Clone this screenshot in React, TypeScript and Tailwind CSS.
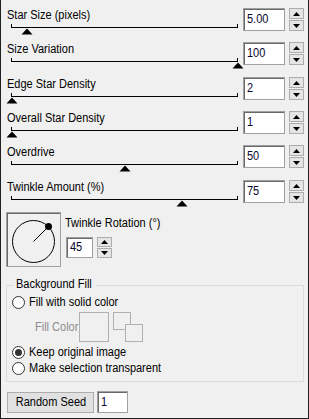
import React from "react";

const FONT = "font-['Liberation_Sans',Arial,sans-serif]";

function T({ children, center }: { children: React.ReactNode; center?: boolean }) {
  return (
    <span
      className={`inline-block whitespace-nowrap scale-x-[0.88] ${center ? "origin-center" : "origin-left"}`}
    >
      {children}
    </span>
  );
}

function Thumb({ left }: { left: number }) {
  return (
    <svg
      className="absolute top-[4px]"
      style={{ left: left - 6 }}
      width="12"
      height="7"
      viewBox="0 0 12 7"
    >
      <polygon points="6,0.5 11.5,6.5 0.5,6.5" fill="#000" />
    </svg>
  );
}

function Spinner({ h = 23 }: { h?: number }) {
  const bh = Math.floor((h - 1) / 2);
  return (
    <div className="flex flex-col gap-[1px]" style={{ height: h }}>
      <div
        className="w-[15px] border border-[#adadad] bg-[#e5e5e5] flex items-center justify-center"
        style={{ height: bh }}
      >
        <svg width="7" height="4" viewBox="0 0 7 4">
          <polygon points="3.5,0 7,4 0,4" fill="#000" />
        </svg>
      </div>
      <div
        className="w-[15px] border border-[#adadad] bg-[#e5e5e5] flex items-center justify-center"
        style={{ height: bh }}
      >
        <svg width="7" height="4" viewBox="0 0 7 4">
          <polygon points="0,0 7,0 3.5,4" fill="#000" />
        </svg>
      </div>
    </div>
  );
}

function NumBox({ value, w, h }: { value: string; w: number; h: number }) {
  return (
    <div
      className="bg-white border border-[#a0a0a0] shadow-[inset_1px_1px_0_#696969] flex items-center pl-[3px] text-[12.5px] text-[#06062e] leading-none"
      style={{ width: w, height: h }}
    >
      <T>{value}</T>
    </div>
  );
}

function SliderRow({
  label,
  value,
  thumb,
  height,
}: {
  label: string;
  value: string;
  thumb: number;
  height: number;
}) {
  return (
    <div className="flex items-start" style={{ height }}>
      <div className="w-[237px] pl-[6px]">
        <div className="h-[15px] leading-[15px] text-[12.5px] text-black">
          <T>{label}</T>
        </div>
        <div className="pl-[4px] mt-[1px]">
          <div className="relative w-[227px] h-[4px] border-l border-r border-b border-black">
            <Thumb left={thumb} />
          </div>
        </div>
      </div>
      <div className="ml-[5px]">
        <NumBox value={value} w={42} h={23} />
      </div>
      <div className="ml-[4px]">
        <Spinner h={23} />
      </div>
    </div>
  );
}

function Radio({ checked, label }: { checked?: boolean; label: string }) {
  return (
    <div className="flex items-center h-[15px]">
      <div className="w-[13px] h-[13px] rounded-full border border-[#333] bg-white flex items-center justify-center">
        {checked && <div className="w-[7px] h-[7px] rounded-full bg-[#333]" />}
      </div>
      <span className="ml-[4px] text-[12.5px] text-black leading-[15px]">
        <T>{label}</T>
      </span>
    </div>
  );
}

export default function App() {
  return (
    <div
      className={`w-[309px] h-[419px] bg-[#f0f0f0] border-l border-r border-b border-[#1f1f1f] pt-[8px] ${FONT}`}
    >
      <SliderRow label="Star Size (pixels)" value="5.00" thumb={15} height={34} />
      <SliderRow label="Size Variation" value="100" thumb={226} height={35} />
      <SliderRow label="Edge Star Density" value="2" thumb={0} height={34} />
      <SliderRow label="Overall Star Density" value="1" thumb={0} height={34} />
      <SliderRow label="Overdrive" value="50" thumb={113} height={35} />
      <SliderRow label="Twinkle Amount (%)" value="75" thumb={170} height={32} />

      <div className="flex pl-[5px]">
        <div className="w-[55px] h-[55px] border border-[#a0a0a0] shadow-[inset_1px_1px_0_#696969]">
          <svg width="53" height="53" viewBox="0 0 53 53">
            <circle cx="26.5" cy="28.5" r="21" fill="none" stroke="#000" strokeWidth="1" />
            <line x1="26.5" y1="28.5" x2="41.5" y2="13.5" stroke="#000" strokeWidth="1" />
            <circle cx="41.5" cy="13.5" r="3.5" fill="#000" />
          </svg>
        </div>
        <div className="ml-[4px] pt-[4px]">
          <div className="h-[15px] leading-[15px] text-[12.5px] text-black">
            <T>Twinkle Rotation (°)</T>
          </div>
          <div className="flex mt-[6px] ml-[1px]">
            <NumBox value="45" w={27} h={21} />
            <div className="ml-[4px]">
              <Spinner h={21} />
            </div>
          </div>
        </div>
      </div>

      <div className="relative ml-[5px] mt-[18px] w-[298px] border border-[#dcdcdc] pt-[9px] pb-[5px] pl-[5px]">
        <div className="absolute left-[7px] top-[-9px] px-[2px] bg-[#f0f0f0] text-[12.5px] leading-[15px] text-black w-[82px]">
          <T>Background Fill</T>
        </div>
        <Radio label="Fill with solid color" />
        <div className="flex items-center mt-[2px] h-[30px]">
          <div className="ml-[23px] w-[44px] text-[12.5px] text-[#8d8d8d] leading-[15px]">
            <T>Fill Color</T>
          </div>
          <div className="w-[30px] h-[30px] border border-[#b0b0b0]" />
          <div className="relative ml-[4px] w-[31px] h-[30px]">
            <div className="absolute left-0 top-0 w-[18px] h-[18px] border border-[#b0b0b0]" />
            <div className="absolute left-[12px] top-[12px] w-[18px] h-[18px] border border-[#b0b0b0] bg-[#f0f0f0]" />
          </div>
        </div>
        <div className="mt-[3px]">
          <Radio checked label="Keep original image" />
        </div>
        <div className="mt-[1px]">
          <Radio label="Make selection transparent" />
        </div>
      </div>

      <div className="flex items-center mt-[9px] pl-[6px]">
        <div className="w-[87px] h-[21px] bg-[#e1e1e1] border border-[#adadad] flex items-center justify-center text-[12.5px] text-black">
          <T center>Random Seed</T>
        </div>
        <div className="ml-[3px]">
          <NumBox value="1" w={31} h={22} />
        </div>
      </div>
    </div>
  );
}
